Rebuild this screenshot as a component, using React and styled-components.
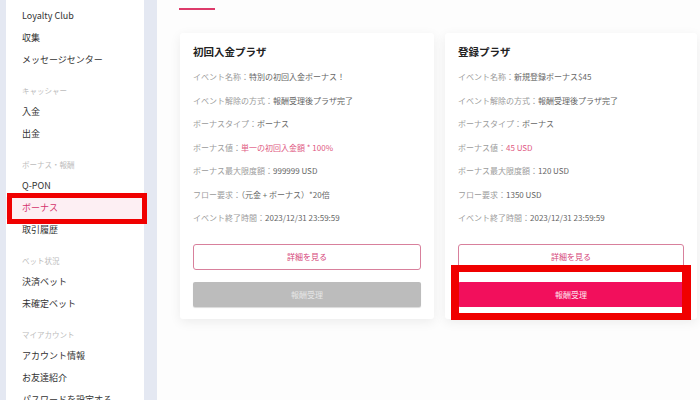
import React from "react";
import styled, { createGlobalStyle } from "styled-components";

const Global = createGlobalStyle`
  html, body { margin: 0; padding: 0; }
  body {
    font-family: "Noto Sans CJK JP", "Noto Sans", sans-serif;
    background: #e4e8f2;
    overflow: hidden;
  }
`;

const Page = styled.div`
  display: flex;
  width: 700px;
  height: 400px;
  overflow: hidden;
  background: #e4e8f2;
`;

const Sidebar = styled.nav`
  width: 138px;
  margin-left: 6px;
  background: #fff;
  padding-top: 5px;
  display: flex;
  flex-direction: column;
`;

const Group = styled.div`
  display: flex;
  flex-direction: column;
  & + & { margin-top: 10px; }
`;

const GroupLabel = styled.div`
  height: 20px;
  line-height: 20px;
  padding-left: 16px;
  font-size: 7.5px;
  color: #bcbcbc;
`;

const NavItem = styled.div`
  position: relative;
  height: 22px;
  line-height: 22px;
  padding-left: 16px;
  font-size: 9px;
  color: ${(p) => (p.$active ? "#d4336c" : "#333")};
  background: ${(p) => (p.$active ? "#fdeff3" : "transparent")};
  white-space: nowrap;
`;

const NavHighlight = styled.span`
  position: absolute;
  left: 1px;
  right: -3px;
  top: -4px;
  bottom: -5px;
  border: 5px solid #f00000;
  pointer-events: none;
`;

const Main = styled.main`
  flex: 1;
  margin-left: 13px;
  background: #fdfdfd;
  padding: 0 3px 0 22px;
  display: flex;
  flex-direction: column;
`;

const Tabs = styled.div`
  display: flex;
  height: 10px;
`;

const Tab = styled.div`
  width: 36px;
  border-bottom: 2px solid #dd3a6a;
`;

const Cards = styled.div`
  margin-top: 23px;
  margin-left: 1px;
  display: grid;
  grid-template-columns: 254px 252px;
  column-gap: 11px;
  align-items: start;
`;

const Card = styled.section`
  background: #fff;
  border-radius: 3px;
  box-shadow: 0 3px 12px rgba(0, 0, 0, 0.07);
  padding: 11px 13px 12px 13px;
  display: flex;
  flex-direction: column;
`;

const CardTitle = styled.h3`
  margin: 0 0 5px 0;
  font-size: 10.5px;
  line-height: 16px;
  font-weight: 700;
  color: #222;
`;

const Row = styled.div`
  font-size: 8px;
  line-height: 23.5px;
  color: #9b9b9b;
  white-space: nowrap;
`;

const Value = styled.span`
  color: ${(p) => (p.$pink ? "#e05a83" : "#666")};
`;

const Buttons = styled.div`
  margin-top: 14px;
  display: flex;
  flex-direction: column;
  gap: 9px;
`;

const OutlineButton = styled.button`
  height: 26px;
  border: 1px solid #d8809c;
  border-radius: 3px;
  background: #fff;
  color: #d5467a;
  font-family: inherit;
  font-size: 8px;
`;

const ClaimWrap = styled.div`
  position: relative;
`;

const ClaimButton = styled.button`
  width: 100%;
  height: 25px;
  border: none;
  border-radius: 2px;
  font-family: inherit;
  font-size: 8px;
  background: ${(p) => (p.$disabled ? "#bcbcbc" : "#f20f5c")};
  color: ${(p) => (p.$disabled ? "#e6e6e6" : "#fde6ee")};
  box-shadow: ${(p) => (p.$disabled ? "0 1px 1px rgba(0,0,0,0.15)" : "none")};
`;

const ClaimHighlight = styled.span`
  position: absolute;
  left: -7px;
  right: -7px;
  top: -14px;
  bottom: -13px;
  border: 7px solid #f00000;
  border-left-width: 8px;
  border-right-width: 9px;
  pointer-events: none;
`;

const nav = [
  { items: ["Loyalty Club", "収集", "メッセージセンター"] },
  { label: "キャッシャー", items: ["入金", "出金"] },
  { label: "ボーナス・報酬", items: ["Q-PON", "ボーナス", "取引履歴"] },
  { label: "ベット状況", items: ["決済ベット", "未確定ベット"] },
  { label: "マイアカウント", items: ["アカウント情報", "お友達紹介", "パスワードを設定する"] },
];

const cards = [
  {
    title: "初回入金プラザ",
    rows: [
      ["イベント名称：", "特別の初回入金ボーナス！"],
      ["イベント解除の方式：", "報酬受理後プラザ完了"],
      ["ボーナスタイプ：", "ボーナス"],
      ["ボーナス値：", "単一の初回入金額 * 100%", true],
      ["ボーナス最大限度額：", "999999 USD"],
      ["フロー要求：", "（元金 + ボーナス）*20倍"],
      ["イベント終了時間：", "2023/12/31 23:59:59"],
    ],
    disabled: true,
  },
  {
    title: "登録プラザ",
    rows: [
      ["イベント名称：", "新規登録ボーナス$45"],
      ["イベント解除の方式：", "報酬受理後プラザ完了"],
      ["ボーナスタイプ：", "ボーナス"],
      ["ボーナス値：", "45 USD", true],
      ["ボーナス最大限度額：", "120 USD"],
      ["フロー要求：", "1350 USD"],
      ["イベント終了時間：", "2023/12/31 23:59:59"],
    ],
    disabled: false,
  },
];

export default function App() {
  return (
    <>
      <Global />
      <Page>
        <Sidebar>
          {nav.map((g, i) => (
            <Group key={i}>
              {g.label && <GroupLabel>{g.label}</GroupLabel>}
              {g.items.map((it) => (
                <NavItem key={it} $active={it === "ボーナス"}>
                  {it}
                  {it === "ボーナス" && <NavHighlight />}
                </NavItem>
              ))}
            </Group>
          ))}
        </Sidebar>
        <Main>
          <Tabs>
            <Tab />
          </Tabs>
          <Cards>
            {cards.map((c) => (
              <Card key={c.title}>
                <CardTitle>{c.title}</CardTitle>
                {c.rows.map(([l, v, pink]) => (
                  <Row key={l}>
                    {l}
                    <Value $pink={pink}>{v}</Value>
                  </Row>
                ))}
                <Buttons>
                  <OutlineButton>詳細を見る</OutlineButton>
                  <ClaimWrap>
                    <ClaimButton $disabled={c.disabled}>報酬受理</ClaimButton>
                    {!c.disabled && <ClaimHighlight />}
                  </ClaimWrap>
                </Buttons>
              </Card>
            ))}
          </Cards>
        </Main>
      </Page>
    </>
  );
}
